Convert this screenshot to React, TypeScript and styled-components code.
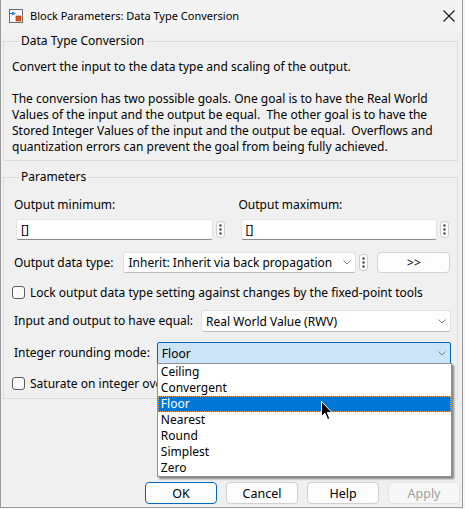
import styled, { createGlobalStyle } from "styled-components";

const GlobalStyle = createGlobalStyle`
  html, body {
    margin: 0;
    padding: 0;
    background: #f7f7f7;
  }
  body {
    font-family: "Noto Sans", "Open Sans", sans-serif;
    font-size: 12px;
    color: #000;
  }
`;

const Window = styled.div`
  position: relative;
  box-sizing: border-box;
  width: 463px;
  height: 508px;
  display: flex;
  flex-direction: column;
  background: #f0f0f0;
  border: 1px solid #9a9a9a;
  border-top: none;
  overflow: hidden;
`;

const TitleBar = styled.div`
  height: 31px;
  flex: none;
  display: flex;
  align-items: center;
  padding: 1px 6px 0 8px;
  box-sizing: border-box;
  background: #f3f3f3;
`;

const TitleText = styled.span`
  flex: 1;
  margin-left: 7px;
  font-size: 11px;
  line-height: 16px;
`;

const CloseIcon = styled.svg`
  width: 12px;
  height: 12px;
  margin-right: 1px;
`;

const Body = styled.div`
  flex: 1;
  display: flex;
  flex-direction: column;
  padding: 2px 4px 3px 2px;
`;

const Group = styled.fieldset<{ $gap?: number }>`
  margin: ${(p) => p.$gap ?? 0}px 0 0 0;
  padding: 10px 6px 5px 8px;
  border: 1px solid #dcdcdc;
  min-width: 0;
`;

const Legend = styled.legend`
  padding: 0 2px;
  margin-left: 7px;
  line-height: 16px;
  font-size: 12px;
`;

const Description = styled.p`
  margin: 0;
  line-height: 16px;
  white-space: pre-wrap;
`;

const ParamsBody = styled.div`
  display: flex;
  flex-direction: column;
  padding: 2px 0 1px 2px;
`;

const MinMaxGrid = styled.div`
  display: grid;
  grid-template-columns: 1fr 1fr;
  column-gap: 12px;
`;

const Column = styled.div`
  display: flex;
  flex-direction: column;
  gap: 6px;
`;

const Label = styled.span`
  line-height: 16px;
  white-space: nowrap;
`;

const FieldRow = styled.div`
  display: flex;
  align-items: center;
  gap: 3px;
  padding: 0 2px;
`;

const TextInput = styled.input`
  flex: 1;
  min-width: 0;
  box-sizing: border-box;
  height: 21px;
  padding: 0 4px;
  border: 1px solid #e3e3e3;
  border-bottom-color: #8a8a8a;
  border-radius: 3px;
  background: #fff;
  font: inherit;
  color: #000;
  outline: none;
`;

const DotsButton = styled.div<{ $left?: number }>`
  box-sizing: border-box;
  width: 9px;
  height: 17px;
  flex: none;
  display: flex;
  align-items: center;
  justify-content: center;
  margin-left: ${(p) => p.$left ?? 0}px;
  border: 1px solid #cfcfcf;
  border-radius: 3px;
  background: #fbfbfb;
`;

const Row = styled.div<{ $top: number }>`
  display: flex;
  align-items: center;
  margin-top: ${(p) => p.$top}px;
`;

const ComboWrap = styled.div<{ $left?: number; $width?: number }>`
  position: relative;
  margin-left: ${(p) => p.$left ?? 0}px;
  ${(p) => (p.$width ? `width: ${p.$width}px;` : "flex: 1;")}
`;

const Combo = styled.div<{ $selected?: boolean; $height?: number }>`
  box-sizing: border-box;
  height: ${(p) => p.$height ?? 22}px;
  display: flex;
  align-items: center;
  justify-content: space-between;
  padding: 0 4px 0 4px;
  border: 1px solid ${(p) => (p.$selected ? "#0067c0" : "#e0e0e0")};
  border-bottom-color: ${(p) => (p.$selected ? "#0067c0" : "#bdbdbd")};
  border-radius: ${(p) => (p.$selected ? "2px 2px 0 0" : "3px")};
  background: ${(p) => (p.$selected ? "#cce4f7" : "#fff")};
  white-space: nowrap;
`;

const Chevron = styled.svg`
  width: 8px;
  height: 5px;
  flex: none;
`;

const MoreButton = styled.div`
  box-sizing: border-box;
  width: 73px;
  height: 21px;
  margin-left: 9px;
  display: flex;
  align-items: center;
  justify-content: center;
  border: 1px solid #d2d2d2;
  border-radius: 4px;
  background: #fdfdfd;
  font-size: 12px;
`;

const CheckRow = styled.label<{ $top: number }>`
  display: flex;
  align-items: center;
  gap: 5px;
  margin: ${(p) => p.$top}px 0 0 -2px;
  height: 18px;
  white-space: nowrap;
`;

const CheckBox = styled.span`
  box-sizing: border-box;
  flex: none;
  width: 13px;
  height: 13px;
  border: 1px solid #5c5c5c;
  border-radius: 3px;
  background: #fbfbfb;
`;

const DropList = styled.ul`
  position: absolute;
  top: 21px;
  left: 0;
  right: -1px;
  margin: 0;
  padding: 0;
  list-style: none;
  background: #fff;
  border: 1px solid #8f8f8f;
  box-shadow: 2px 2px 2px rgba(0, 0, 0, 0.45);
  z-index: 2;
  font-size: 12px;
`;

const DropItem = styled.li<{ $active?: boolean }>`
  height: 16px;
  line-height: 16px;
  padding-left: 3px;
  color: ${(p) => (p.$active ? "#fff" : "#000")};
  background: ${(p) => (p.$active ? "#0078d7" : "transparent")};
  outline: ${(p) => (p.$active ? "1px dotted #e8a25a" : "none")};
  outline-offset: -1px;
`;

const ButtonBar = styled.div`
  margin: auto -2px 0 0;
  display: flex;
  justify-content: flex-end;
  gap: 9px;
`;

const DialogButton = styled.div<{ $primary?: boolean; $disabled?: boolean }>`
  box-sizing: border-box;
  width: 72px;
  height: 22px;
  display: flex;
  align-items: center;
  justify-content: center;
  border: 1px solid ${(p) => (p.$primary ? "#0067c0" : p.$disabled ? "#e3e3e3" : "#d0d0d0")};
  border-radius: 4px;
  background: ${(p) => (p.$disabled ? "#f7f7f7" : "#fdfdfd")};
  color: ${(p) => (p.$disabled ? "#a0a0a0" : "#000")};
  font-size: 12.5px;
`;

const Cursor = styled.svg`
  position: absolute;
  left: 320px;
  top: 401px;
  width: 12px;
  height: 20px;
  z-index: 3;
`;

const ChevronIcon = () => (
  <Chevron viewBox="0 0 8 5">
    <path d="M0.5 0.5 L4 4 L7.5 0.5" fill="none" stroke="#707070" strokeWidth="0.9" />
  </Chevron>
);

const Dots = () => (
  <svg width="3" height="11" viewBox="0 0 3 11">
    <rect x="0.5" y="0.5" width="2" height="2" fill="#222" />
    <rect x="0.5" y="4.5" width="2" height="2" fill="#222" />
    <rect x="0.5" y="8.5" width="2" height="2" fill="#222" />
  </svg>
);

const BlockIcon = () => (
  <svg width="14" height="14" viewBox="0 0 14 14">
    <rect x="0.5" y="0.5" width="13" height="13" fill="#fafafa" stroke="#6b6b6b" />
    <path d="M3 2.5 L7 4.5 L3 6.5 Z" fill="#2f7fd0" />
    <path d="M1 4.5 H3" stroke="#2f7fd0" strokeWidth="1" />
    <rect x="7" y="7" width="5" height="5" fill="#e2541e" stroke="#a8330d" strokeWidth="0.6" />
  </svg>
);

const description =
  "Convert the input to the data type and scaling of the output.\n\n" +
  "The conversion has two possible goals. One goal is to have the Real World\n" +
  "Values of the input and the output be equal.  The other goal is to have the\n" +
  "Stored Integer Values of the input and the output be equal.  Overflows and\n" +
  "quantization errors can prevent the goal from being fully achieved.";

const roundingModes = ["Ceiling", "Convergent", "Floor", "Nearest", "Round", "Simplest", "Zero"];

export default function App() {
  return (
    <>
      <GlobalStyle />
      <Window>
        <TitleBar>
          <BlockIcon />
          <TitleText>Block Parameters: Data Type Conversion</TitleText>
          <CloseIcon viewBox="0 0 12 12">
            <path d="M0.5 0.5 L11.5 11.5 M11.5 0.5 L0.5 11.5" stroke="#1a1a1a" strokeWidth="1.1" />
          </CloseIcon>
        </TitleBar>
        <Body>
          <Group>
            <Legend>Data Type Conversion</Legend>
            <Description>{description}</Description>
          </Group>
          <Group $gap={8}>
            <Legend>Parameters</Legend>
            <ParamsBody>
              <MinMaxGrid>
                <Column>
                  <Label>Output minimum:</Label>
                  <FieldRow>
                    <TextInput readOnly value="[]" />
                    <DotsButton>
                      <Dots />
                    </DotsButton>
                  </FieldRow>
                </Column>
                <Column>
                  <Label>Output maximum:</Label>
                  <FieldRow>
                    <TextInput readOnly value="[]" />
                    <DotsButton>
                      <Dots />
                    </DotsButton>
                  </FieldRow>
                </Column>
              </MinMaxGrid>

              <Row $top={12}>
                <Label>Output data type:</Label>
                <ComboWrap $left={10} $width={233}>
                  <Combo $height={21}>
                    Inherit: Inherit via back propagation
                    <ChevronIcon />
                  </Combo>
                </ComboWrap>
                <DotsButton $left={3}>
                  <Dots />
                </DotsButton>
                <MoreButton>&gt;&gt;</MoreButton>
              </Row>

              <CheckRow $top={10}>
                <CheckBox />
                Lock output data type setting against changes by the fixed-point tools
              </CheckRow>

              <Row $top={9}>
                <Label>Input and output to have equal:</Label>
                <ComboWrap $left={8}>
                  <Combo>
                    Real World Value (RWV)
                    <ChevronIcon />
                  </Combo>
                </ComboWrap>
              </Row>

              <Row $top={10}>
                <Label>Integer rounding mode:</Label>
                <ComboWrap $left={7}>
                  <Combo $selected>
                    Floor
                    <ChevronIcon />
                  </Combo>
                  <DropList>
                    {roundingModes.map((m) => (
                      <DropItem key={m} $active={m === "Floor"}>
                        {m}
                      </DropItem>
                    ))}
                  </DropList>
                </ComboWrap>
              </Row>

              <CheckRow $top={10}>
                <CheckBox />
                Saturate on integer overflow
              </CheckRow>
            </ParamsBody>
          </Group>
          <ButtonBar>
            <DialogButton $primary>OK</DialogButton>
            <DialogButton>Cancel</DialogButton>
            <DialogButton>Help</DialogButton>
            <DialogButton $disabled>Apply</DialogButton>
          </ButtonBar>
        </Body>
        <Cursor viewBox="0 0 12 20">
          <path
            d="M0.5 0.5 L0.5 15.5 L4 12.2 L6.6 18.5 L8.8 17.6 L6.3 11.5 L11 11.5 Z"
            fill="#000"
            stroke="#fff"
            strokeWidth="1"
          />
        </Cursor>
      </Window>
    </>
  );
}
